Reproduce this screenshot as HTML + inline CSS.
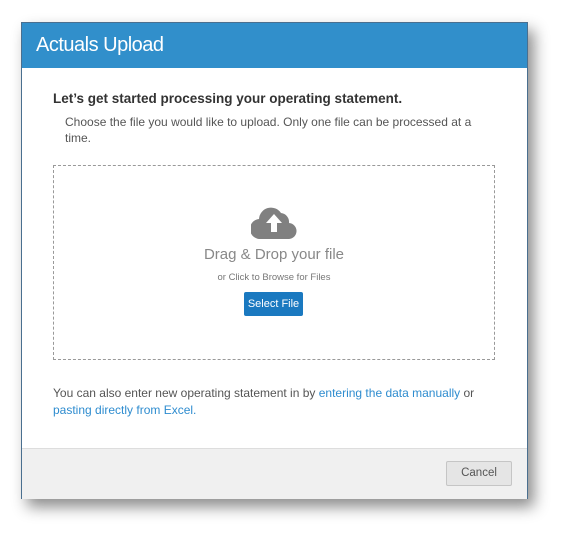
<!DOCTYPE html>
<html><head><style>
body{margin:0;width:568px;height:541px;background:#fff;font-family:"Liberation Sans",sans-serif;position:relative;overflow:hidden}
.dlg{position:absolute;left:21px;top:22px;width:505px;height:475px;border:1px solid #4a6f8f;background:#fff;box-shadow:6px 8px 14px rgba(0,0,0,.45)}
.hd{height:45px;background:#318fcb;color:#fff;font-size:20px;line-height:45px;padding-left:14px;letter-spacing:-0.5px}
.t1{position:absolute;left:31px;top:68px;font-size:13.5px;font-weight:bold;color:#333}
.t2{position:absolute;left:43px;top:91px;font-size:12px;color:#555;line-height:16px;width:430px}
.drop{position:absolute;left:31px;top:142px;width:440px;height:193px;border:1px dashed #999}
.dd{position:absolute;left:0;width:100%;text-align:center}
.btn{position:absolute;left:190px;top:126px;width:59px;height:24px;background:#1a79c0;border-radius:2px;color:#fff;font-size:11px;line-height:24px;text-align:center}
.t3{position:absolute;left:31px;top:362px;font-size:12px;color:#555;line-height:17px;width:450px}
a{color:#2e8ccf;text-decoration:none}
.ft{position:absolute;left:0;top:425px;width:505px;height:50px;background:#f0f0f0;border-top:1px solid #ddd}
.cn{position:absolute;left:424px;top:12px;width:64px;height:23px;border:1px solid #c5c5c5;background:#e5e5e5;border-radius:2px;font-size:11.5px;color:#555;text-align:center;line-height:23px}
</style></head><body>
<div class="dlg">
<div class="hd">Actuals Upload</div>
<div class="t1">Let’s get started processing your operating statement.</div>
<div class="t2">Choose the file you would like to upload. Only one file can be processed at a time.</div>
<div class="drop">
<svg style="position:absolute;left:197px;top:39px" width="46" height="34" viewBox="0 0 46 34"><path d="M10 34 A10 10 0 0 1 8 14 A12 12 0 0 1 30 8 A9 9 0 0 1 38 18 A8 8 0 0 1 37 34 Z" fill="#808080"/><path d="M23 9 L31 18 L26 18 L26 27 L20 27 L20 18 L15 18 Z" fill="#fff"/></svg>
<div class="dd" style="top:80px;font-size:15px;color:#888">Drag &amp; Drop your file</div>
<div class="dd" style="top:106px;font-size:9.5px;color:#777">or Click to Browse for Files</div>
<div class="btn">Select File</div>
</div>
<div class="t3">You can also enter new operating statement in by <a>entering the data manually</a> or <a>pasting directly from Excel.</a></div>
<div class="ft"><div class="cn">Cancel</div></div>
</div>
</body></html>
